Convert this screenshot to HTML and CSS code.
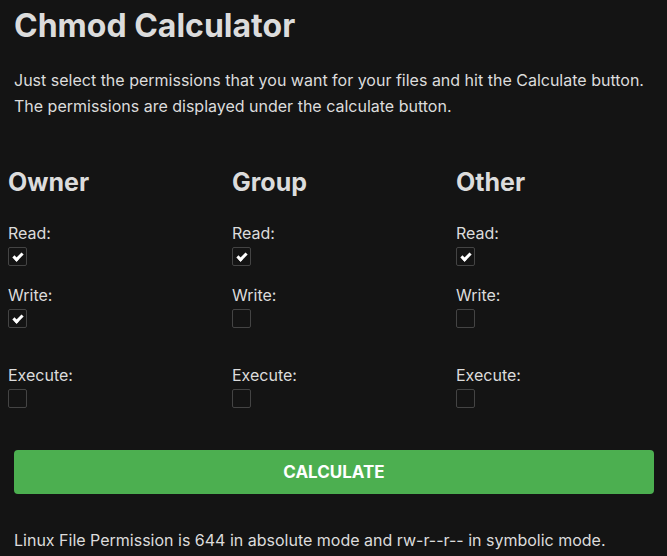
FILE: index.html
```html
<!DOCTYPE html>
<html lang="en">
<head>
<meta charset="utf-8">
<title>Chmod Calculator</title>
<link rel="stylesheet" href="styles.css">
</head>
<body>
<main class="page">
  <h1 class="title">Chmod Calculator</h1>
  <p class="intro">Just select the permissions that you want for your files and hit the Calculate button.<br>The permissions are displayed under the calculate button.</p>
  <div class="grid">
    <section class="col">
      <h2 class="col-title">Owner</h2>
      <div class="perm"><label class="perm-label">Read:</label><input class="cb" type="checkbox" checked></div>
      <div class="perm"><label class="perm-label">Write:</label><input class="cb" type="checkbox" checked></div>
      <div class="perm perm-exec"><label class="perm-label">Execute:</label><input class="cb" type="checkbox"></div>
    </section>
    <section class="col">
      <h2 class="col-title">Group</h2>
      <div class="perm"><label class="perm-label">Read:</label><input class="cb" type="checkbox" checked></div>
      <div class="perm"><label class="perm-label">Write:</label><input class="cb" type="checkbox"></div>
      <div class="perm perm-exec"><label class="perm-label">Execute:</label><input class="cb" type="checkbox"></div>
    </section>
    <section class="col">
      <h2 class="col-title">Other</h2>
      <div class="perm"><label class="perm-label">Read:</label><input class="cb" type="checkbox" checked></div>
      <div class="perm"><label class="perm-label">Write:</label><input class="cb" type="checkbox"></div>
      <div class="perm perm-exec"><label class="perm-label">Execute:</label><input class="cb" type="checkbox"></div>
    </section>
  </div>
  <button class="calc" type="button">Calculate</button>
  <p class="result">Linux File Permission is 644 in absolute mode and rw-r--r-- in symbolic mode.</p>
</main>
</body>
</html>
```
FILE: styles.css
```css
html, body {
  margin: 0;
  padding: 0;
  background: #141414;
}
body {
  font-family: Inter, "Noto Sans", sans-serif;
  color: #dcdcdc;
  overflow: hidden;
}
.page {
  padding: 7px 13px 0 14px;
}
.title {
  margin: 0;
  font-size: 32px;
  line-height: 38px;
  font-weight: 700;
  color: #dcdcdc;
}
.intro {
  margin: 22px 0 0;
  font-size: 16px;
  line-height: 26px;
}
.grid {
  display: grid;
  grid-template-columns: 224px 224px 224px;
  margin: 49px 0 0 -6px;
}
.col-title {
  margin: 0 0 24px;
  font-size: 25px;
  line-height: 29px;
  font-weight: 700;
}
.perm {
  display: flex;
  flex-direction: column;
  align-items: flex-start;
  margin-bottom: 17px;
}
.perm-exec {
  margin-top: 35px;
  margin-bottom: 0;
}
.perm-label {
  font-size: 16px;
  line-height: 24px;
}
.cb {
  appearance: none;
  -webkit-appearance: none;
  margin: 2px 0 0;
  width: 19px;
  height: 19px;
  box-sizing: border-box;
  border: 1px solid #444;
  border-radius: 2px;
  background: #141414;
  position: relative;
}
.cb:checked::after {
  content: "";
  position: absolute;
  left: 6px;
  top: 3px;
  width: 3px;
  height: 7px;
  border-right: 3px solid #fff;
  border-bottom: 3px solid #fff;
  transform: rotate(45deg);
}
.calc {
  display: block;
  width: 640px;
  height: 44px;
  margin: 42px 0 0;
  border: 0;
  border-radius: 4px;
  background: #4caf50;
  color: #fff;
  font-family: Inter, "Noto Sans", sans-serif;
  font-size: 17px;
  font-weight: 700;
  text-transform: uppercase;
}
.result {
  margin: 34px 0 0;
  font-size: 16px;
  line-height: 24px;
}
```
